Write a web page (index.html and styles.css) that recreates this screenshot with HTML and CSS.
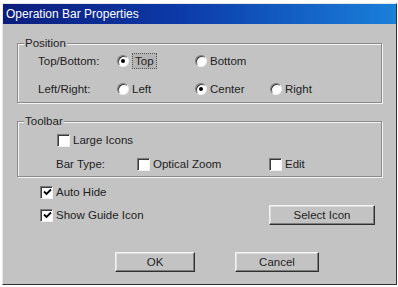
FILE: index.html
```html
<!DOCTYPE html>
<html>
<head>
<meta charset="utf-8">
<link rel="stylesheet" href="styles.css">
</head>
<body>
<div class="dialog">
  <div class="titlebar">Operation Bar Properties</div>

  <div class="group group-position">
    <span class="legend">Position</span>
    <div class="grid pos-grid">
      <span class="lbl">Top/Bottom:</span>
      <span class="opt"><span class="radio checked"></span><span class="focus">Top</span></span>
      <span class="opt"><span class="radio"></span><span class="txt">Bottom</span></span>
      <span></span>
      <span class="lbl">Left/Right:</span>
      <span class="opt"><span class="radio"></span><span class="txt">Left</span></span>
      <span class="opt"><span class="radio checked"></span><span class="txt">Center</span></span>
      <span class="opt"><span class="radio"></span><span class="txt">Right</span></span>
    </div>
  </div>

  <div class="group group-toolbar">
    <span class="legend">Toolbar</span>
    <div class="tb-row1">
      <span class="opt"><span class="check"></span><span class="txt">Large Icons</span></span>
    </div>
    <div class="grid tb-grid">
      <span class="lbl">Bar Type:</span>
      <span class="opt"><span class="check"></span><span class="txt">Optical Zoom</span></span>
      <span class="opt"><span class="check"></span><span class="txt">Edit</span></span>
    </div>
  </div>

  <div class="lower">
    <div class="row auto-row">
      <span class="opt"><span class="check on"><svg viewBox="0 0 9 9" width="9" height="9"><path d="M1 3.5 L3.5 6 L8 1.5" fill="none" stroke="#000" stroke-width="1.8"/></svg></span><span class="txt">Auto Hide</span></span>
    </div>
    <div class="row guide-row">
      <span class="opt"><span class="check on"><svg viewBox="0 0 9 9" width="9" height="9"><path d="M1 3.5 L3.5 6 L8 1.5" fill="none" stroke="#000" stroke-width="1.8"/></svg></span><span class="txt">Show Guide Icon</span></span>
      <button class="btn btn-select">Select Icon</button>
    </div>
  </div>

  <div class="actions">
    <button class="btn btn-ok">OK</button>
    <button class="btn btn-cancel">Cancel</button>
  </div>
</div>
</body>
</html>
```
FILE: styles.css
```css
* { box-sizing: border-box; }
html, body { margin: 0; padding: 0; background: #fff; }
body {
  font-family: "Liberation Sans", Arial, sans-serif;
  font-size: 11.5px;
  color: #1e1e1e;
}
.dialog {
  margin: 3px 0 0 2px;
  width: 395px;
  height: 282px;
  background: #c3c3c3;
  border-left: 1px solid #e6e6e6;
  border-top: 1px solid #e6e6e6;
  border-right: 1px solid #303030;
  border-bottom: 1px solid #303030;
}
.titlebar {
  height: 20px;
  line-height: 20px;
  padding-left: 3px;
  font-size: 12px;
  color: #fff;
  background: linear-gradient(90deg, #0b1d7c 0%, #0c3aa8 45%, #1a80da 100%);
  white-space: nowrap;
}
.group {
  position: relative;
  margin-left: 14px;
  width: 365px;
  border: 1px solid #8a8a8a;
  box-shadow: inset 1px 1px #f4f4f4, 1px 1px #f4f4f4;
}
.legend {
  position: absolute;
  left: 6px;
  top: -9px;
  line-height: 16px;
  padding: 0 1px;
  background: #c3c3c3;
}
.group-position {
  margin-top: 19px;
  padding: 9px 0 5px 20px;
}
.group-toolbar {
  margin-top: 18px;
  padding: 10px 0 4px 38px;
}
.grid { display: grid; align-items: center; }
.pos-grid {
  grid-template-columns: 79px 78px 75px auto;
  grid-auto-rows: 16px;
  row-gap: 12px;
}
.tb-row1 { height: 16px; display: flex; align-items: center; padding-left: 1px; }
.tb-grid {
  margin-top: 8px;
  grid-template-columns: 81px 132px auto;
  grid-auto-rows: 16px;
}
.lbl, .txt { line-height: 16px; white-space: nowrap; }
.opt { display: flex; align-items: center; white-space: nowrap; }
.radio {
  position: relative;
  flex: none;
  width: 12px;
  height: 12px;
  border-radius: 50%;
  background: #fff;
  border: 1px solid;
  border-color: #7a7a7a #f0f0f0 #f0f0f0 #7a7a7a;
  box-shadow: inset 1px 1px #3a3a3a;
  margin-right: 3px;
}
.radio.checked::after {
  content: "";
  position: absolute;
  left: 3px;
  top: 3px;
  width: 4px;
  height: 4px;
  border-radius: 50%;
  background: #000;
}
.focus {
  line-height: 14px;
  padding: 0 2px;
  border: 1px dotted #555;
  background: #b4b4b4;
}
.check {
  flex: none;
  width: 13px;
  height: 13px;
  background: #fff;
  border: 1px solid;
  border-color: #7a7a7a #f0f0f0 #f0f0f0 #7a7a7a;
  box-shadow: inset 1px 1px #3a3a3a;
  margin-right: 3px;
  display: flex;
  align-items: center;
  justify-content: center;
}
.check svg { display: block; margin: 1px 0 0 1px; }
.lower {
  margin-top: 7px;
  padding-left: 37px;
}
.row { display: flex; align-items: center; }
.auto-row { height: 16px; }
.guide-row { margin-top: 5px; height: 20px; }
.btn {
  font: inherit;
  color: #1e1e1e;
  height: 20px;
  padding: 0;
  background: #c3c3c3;
  border: 1px solid;
  border-color: #f4f4f4 #303030 #303030 #f4f4f4;
  box-shadow: inset -1px -1px #7e7e7e, inset 1px 1px #dedede;
}
.btn-select { margin-left: auto; margin-right: 21px; width: 106px; }
.actions {
  margin-top: 27px;
  padding-left: 112px;
  display: flex;
  gap: 40px;
}
.btn-ok { width: 80px; }
.btn-cancel { width: 84px; }
```
